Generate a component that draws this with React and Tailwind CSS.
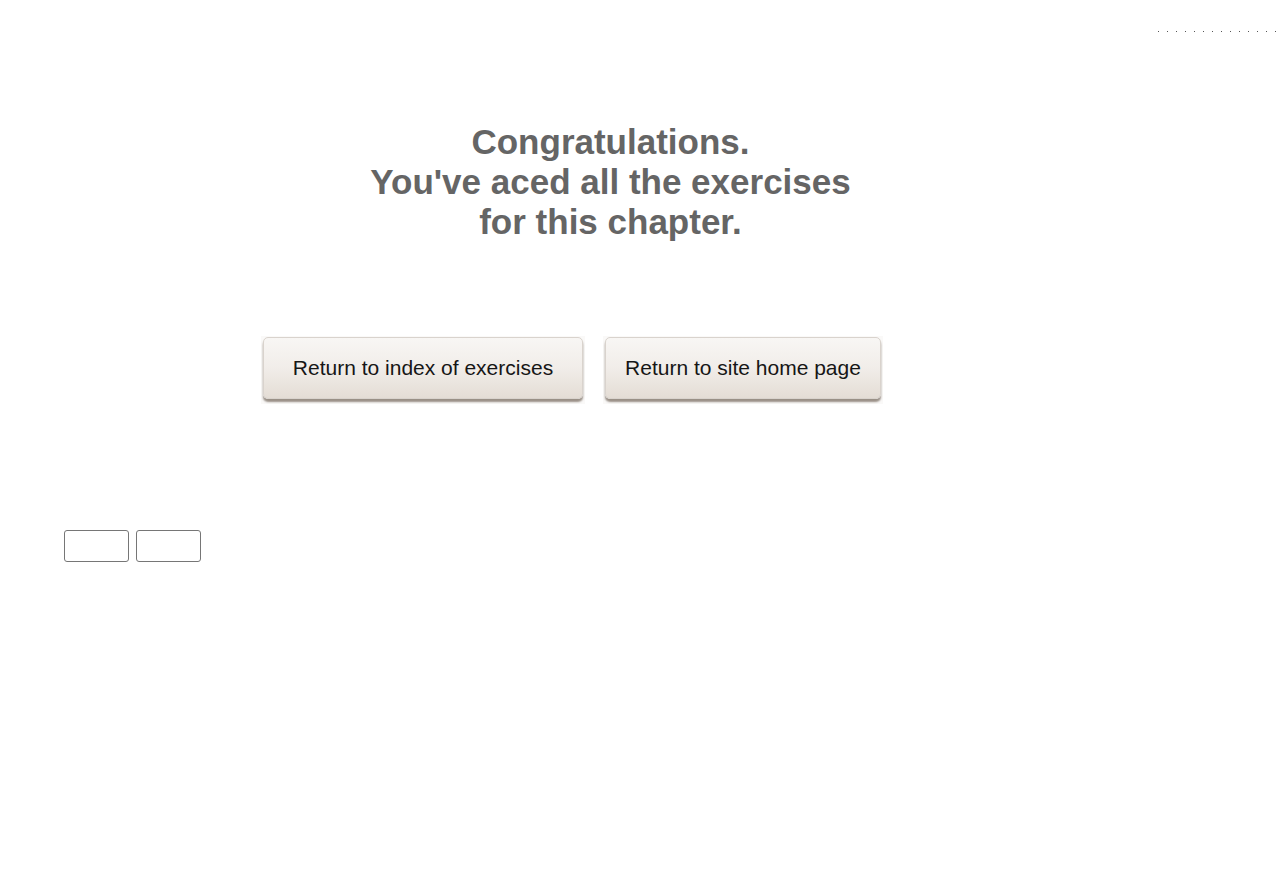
const ImageButton = ({ label, width }) => {
  return (
    <div className={`h-[68px] bg-[#faf9f8] px-[2px] pt-[1px] pb-[5px] ${width}`}>
      <div className="h-full flex items-center justify-center rounded-[5px] border border-[#d9d3cd] bg-gradient-to-b from-[#f8f6f4] via-[#f1ede9] to-[#e4ddd5] shadow-[0_3px_2px_rgba(120,108,96,0.75)]">
        <span className="text-[21px] text-[#161616] font-['Liberation_Sans',Arial,sans-serif]">
          {label}
        </span>
      </div>
    </div>
  );
};

export default function App() {
  return (
    <div className="min-h-[880px] bg-white font-['Liberation_Sans',Arial,sans-serif]">
      {/* Top strip */}
      <div className="flex justify-end pt-[31px] pr-[2px]">
        <div className="w-[122px] h-px bg-[repeating-linear-gradient(to_right,#555_0_1px,transparent_1px_9px)]" />
      </div>

      {/* Heading */}
      <div className="w-[1221px] pt-[90px] text-center">
        <h1 className="text-[35px] font-bold leading-[40px] text-[#656565]">
          Congratulations.
          <br />
          You've aced all the exercises
          <br />
          for this chapter.
        </h1>
      </div>

      {/* Navigation buttons */}
      <div className="flex gap-[18px] pl-[261px] pt-[94px]">
        <ImageButton label="Return to index of exercises" width="w-[324px]" />
        <ImageButton label="Return to site home page" width="w-[280px]" />
      </div>

      {/* Empty controls */}
      <div className="flex gap-[7px] pl-[64px] pt-[126px]">
        <button className="w-[65px] h-[32px] rounded-[3px] border border-[#767676] bg-white" />
        <button className="w-[65px] h-[32px] rounded-[3px] border border-[#767676] bg-white" />
      </div>
    </div>
  );
}
